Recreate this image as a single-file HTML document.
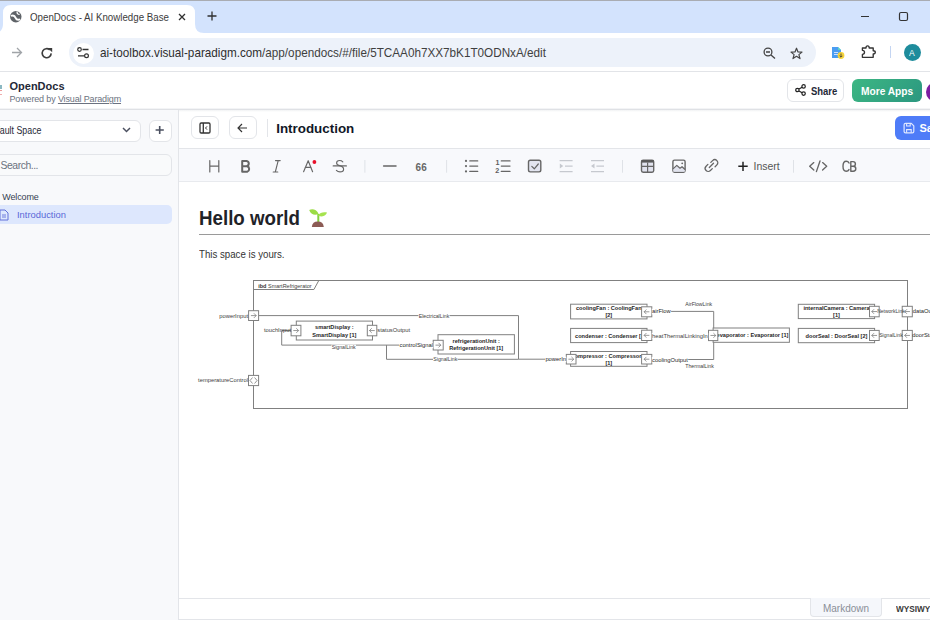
<!DOCTYPE html>
<html><head><meta charset="utf-8"><title>OpenDocs</title>
<style>
html,body{margin:0;padding:0;width:930px;height:620px;overflow:hidden;background:#fff;font-family:"Liberation Sans", sans-serif;}
.t{position:absolute;white-space:nowrap;font-family:"Liberation Sans", sans-serif;}
.r{position:absolute;}
svg.r{overflow:visible}
</style></head><body>
<div class="r" style="left:0px;top:0px;width:930px;height:33px;background:#d3e3fd"></div>
<div class="r" style="left:0px;top:0px;width:930px;height:1px;background:#a9acb2"></div>
<svg class="r" style="left:-6px;top:4px;" width="210" height="30" viewBox="0 0 210 30"><path d="M0 29 Q9 29 9 20 L9 9 Q9 1 17 1 L193 1 Q201 1 201 9 L201 20 Q201 29 210 29 Z" fill="#fff"/></svg>
<svg class="r" style="left:10px;top:11px;" width="12" height="12" viewBox="0 0 12 12"><circle cx="5.8" cy="5.8" r="5.7" fill="#5f6368"/><path d="M1 4.8 C3.2 4 5 5.2 5.6 6.8 C6.2 8.4 8 9.2 10.2 8.4" stroke="#fff" stroke-width="1.9" fill="none"/><path d="M7.2 0.6 C6.8 2.2 7.6 3.4 9.6 3.4" stroke="#fff" stroke-width="1.3" fill="none"/></svg>
<div class="t" style="left:29.50px;top:11.53px;font-size:11.3px;line-height:11.3px;font-weight:400;color:#3c3c3c;letter-spacing:0px;transform:scaleX(0.861);transform-origin:0 0;">OpenDocs - AI Knowledge Base</div>
<svg class="r" style="left:178px;top:13px;" width="8" height="8" viewBox="0 0 8 8"><path d="M1 1 L7 7 M7 1 L1 7" stroke="#303030" stroke-width="1.3"/></svg>
<svg class="r" style="left:207px;top:11.4px;" width="10" height="10" viewBox="0 0 10 10"><path d="M5 0.5 V9.5 M0.5 5 H9.5" stroke="#303030" stroke-width="1.3"/></svg>
<div class="r" style="left:861px;top:16px;width:8px;height:1px;background:#333"></div>
<svg class="r" style="left:898px;top:11px;" width="11" height="11" viewBox="0 0 11 11"><rect x="1.5" y="1.5" width="8" height="8" rx="1.5" fill="none" stroke="#333" stroke-width="1.2"/></svg>
<div class="r" style="left:0px;top:33px;width:930px;height:38px;background:#fff"></div>
<div class="r" style="left:0px;top:71px;width:930px;height:1px;background:#e2e4e8"></div>
<svg class="r" style="left:11px;top:47px;" width="12" height="11" viewBox="0 0 12 11"><path d="M1 5.5 H10.5 M6 1 L10.5 5.5 L6 10" stroke="#a0a4a8" stroke-width="1.3" fill="none"/></svg>
<svg class="r" style="left:41px;top:46.5px;" width="12" height="12" viewBox="0 0 12 12"><path d="M10.2 6.4 A4.5 4.5 0 1 1 8.8 2.9" stroke="#3c3c3c" stroke-width="1.6" fill="none"/><path d="M6.8 0.9 L11.2 0.9 L11.2 5.3 Z" fill="#3c3c3c"/></svg>
<div class="r" style="left:69px;top:38px;width:747px;height:29px;background:#edf2fa;border-radius:14.5px"></div>
<div class="r" style="left:72.5px;top:42.5px;width:21px;height:21px;background:#fff;border-radius:50%"></div>
<svg class="r" style="left:77px;top:47px;" width="13" height="12" viewBox="0 0 13 12"><circle cx="2.5" cy="2.5" r="1.8" fill="none" stroke="#333" stroke-width="1.2"/><path d="M5.5 2.5 H11.5 M1 8.8 H7" stroke="#333" stroke-width="1.3"/><circle cx="9.5" cy="8.8" r="1.9" fill="none" stroke="#333" stroke-width="1.2"/></svg>
<div class="t" style="left:100.00px;top:46.65px;font-size:12.7px;line-height:12.7px;font-weight:400;color:#1f1f1f;letter-spacing:0px;transform:scaleX(0.923);transform-origin:0 0;"><span style="color:#2e2e2e">ai-toolbox.visual-paradigm.com</span><span style="color:#3f3f3f">/app/opendocs/#/file/5TCAA0h7XX7bK1T0ODNxA/edit</span></div>
<svg class="r" style="left:763px;top:47px;" width="13" height="12" viewBox="0 0 13 12"><circle cx="5" cy="5" r="3.9" fill="none" stroke="#444" stroke-width="1.3"/><path d="M3 5 H7 M8 8 L12 11.6" stroke="#444" stroke-width="1.3"/></svg>
<svg class="r" style="left:790px;top:46.5px;" width="13" height="13" viewBox="0 0 13 13"><path d="M6.5 1.2 L8 5 L12 5.1 L8.9 7.6 L10 11.6 L6.5 9.3 L3 11.6 L4.1 7.6 L1 5.1 L5 5 Z" fill="none" stroke="#444" stroke-width="1.2" stroke-linejoin="round"/></svg>
<svg class="r" style="left:831px;top:46px;" width="14" height="13" viewBox="0 0 14 13"><path d="M1 1 H7 L10 4 V12 H1 Z" fill="#4a9df2"/><path d="M7 1 L10 4 H7 Z" fill="#5fd3c4"/><rect x="3" y="6" width="4" height="1" fill="#cfe0ff"/><rect x="3" y="8" width="4" height="1" fill="#cfe0ff"/><circle cx="10" cy="9.5" r="3.4" fill="#f5d33b"/><path d="M10 7.5 V11 M8.6 9.8 L10 11.2 L11.4 9.8" stroke="#333" stroke-width="0.8" fill="none"/></svg>
<svg class="r" style="left:0px;top:0px;" width="930" height="70" viewBox="0 0 930 70"><path d="M862.4 48 H866 C866 45.2 869.2 45.2 869.2 48 H873.2 V50.7 C876 50.7 876 53.9 873.2 53.9 V57.3 H862.4 V54.4 C865.2 54.4 865.2 50.3 862.4 50.3 Z" fill="none" stroke="#333" stroke-width="1.35" stroke-linejoin="round"/></svg>
<div class="r" style="left:890px;top:46px;width:1px;height:12px;background:#c4d5f2"></div>
<div class="r" style="left:904px;top:44px;width:17px;height:17px;background:#1e8c9c;border-radius:50%"></div>
<div class="t" style="left:909.20px;top:47.76px;font-size:9.5px;line-height:9.5px;font-weight:400;color:#fff;letter-spacing:0px;transform:scaleX(0.9);transform-origin:0 0;">A</div>
<div class="r" style="left:0px;top:72px;width:930px;height:37px;background:#fff"></div>
<div class="r" style="left:0px;top:108px;width:930px;height:1px;background:#f3f4f6"></div>
<div class="r" style="left:0px;top:109px;width:930px;height:1px;background:#dfe1e5"></div>
<div class="r" style="left:0px;top:85px;width:1.6px;height:4px;background:#5a9aa8;opacity:.7"></div>
<div class="r" style="left:0px;top:90px;width:1.6px;height:1px;background:#e05a5a;opacity:.6"></div>
<div class="r" style="left:0px;top:94px;width:1.6px;height:1px;background:#e05a5a;opacity:.5"></div>
<div class="t" style="left:9.50px;top:80.99px;font-size:11px;line-height:11px;font-weight:700;color:#1f2937;letter-spacing:0px;">OpenDocs</div>
<div class="t" style="left:9.50px;top:95.18px;font-size:9px;line-height:9px;font-weight:400;color:#6b7280;letter-spacing:-0.15px;">Powered by <span style="text-decoration:underline">Visual Paradigm</span></div>
<div class="r" style="left:786.5px;top:78.5px;width:57px;height:23px;background:#fff;border:1px solid #e3e5e9;border-radius:6px;box-sizing:border-box"></div>
<svg class="r" style="left:795px;top:84px;" width="11" height="12" viewBox="0 0 11 12"><circle cx="8.6" cy="2.4" r="1.7" fill="none" stroke="#222" stroke-width="1.2"/><circle cx="2.4" cy="6" r="1.7" fill="none" stroke="#222" stroke-width="1.2"/><circle cx="8.6" cy="9.6" r="1.7" fill="none" stroke="#222" stroke-width="1.2"/><path d="M4 5.1 L7.1 3.3 M4 6.9 L7.1 8.7" stroke="#222" stroke-width="1.2"/></svg>
<div class="t" style="left:810.60px;top:85.59px;font-size:11px;line-height:11px;font-weight:700;color:#1f2937;letter-spacing:0px;transform:scaleX(0.86);transform-origin:0 0;">Share</div>
<div class="r" style="left:852px;top:78.5px;width:69.5px;height:23.5px;background:linear-gradient(135deg,#3db783,#2b9780);border-radius:6px"></div>
<div class="t" style="left:861.00px;top:85.59px;font-size:11px;line-height:11px;font-weight:700;color:#fff;letter-spacing:0px;transform:scaleX(0.925);transform-origin:0 0;">More Apps</div>
<div class="r" style="left:926px;top:82px;width:20px;height:20px;background:#7b1fa2;border-radius:50%"></div>
<div class="r" style="left:0px;top:110px;width:178px;height:510px;background:#f8f9fb"></div>
<div class="r" style="left:178px;top:110px;width:1px;height:510px;background:#e3e5e9"></div>
<div class="r" style="left:-30px;top:119.5px;width:171px;height:22px;background:#fff;border:1px solid #e3e5e9;border-radius:6px;box-sizing:border-box"></div>
<div class="t" style="left:-13.60px;top:125.67px;font-size:10.2px;line-height:10.2px;font-weight:400;color:#1f2937;letter-spacing:0px;transform:scaleX(0.867);transform-origin:0 0;">Default Space</div>
<svg class="r" style="left:122px;top:127px;" width="9" height="6" viewBox="0 0 9 6"><path d="M1 1 L4.5 4.5 L8 1" stroke="#4b5060" stroke-width="1.45" fill="none"/></svg>
<div class="r" style="left:149px;top:119.5px;width:22.5px;height:22px;background:#fff;border:1px solid #e3e5e9;border-radius:6px;box-sizing:border-box"></div>
<svg class="r" style="left:155px;top:125px;" width="11" height="11" viewBox="0 0 11 11"><path d="M4.7 0.9 V9 M0.6 4.95 H8.8" stroke="#4b5060" stroke-width="1.6"/></svg>
<div class="r" style="left:-30px;top:153.5px;width:201.5px;height:22px;background:#f9fafb;border:1px solid #e3e5e9;border-radius:6px;box-sizing:border-box"></div>
<div class="t" style="left:0.50px;top:160.60px;font-size:10.4px;line-height:10.4px;font-weight:400;color:#6b7280;letter-spacing:-0.45px;">Search...</div>
<div class="t" style="left:2.30px;top:193.18px;font-size:9px;line-height:9px;font-weight:400;color:#374151;letter-spacing:-0.14px;">Welcome</div>
<div class="r" style="left:-10px;top:205px;width:182px;height:18.5px;background:#dde7fd;border-radius:5px"></div>
<svg class="r" style="left:-1px;top:208.5px;" width="10" height="12" viewBox="0 0 10 12"><path d="M1 1 H6 L9 4 V11 H1 Z" fill="none" stroke="#6271d9" stroke-width="1"/><path d="M3 6 H7 M3 8 H7" stroke="#6271d9" stroke-width="0.9"/></svg>
<div class="t" style="left:17.00px;top:209.74px;font-size:9.4px;line-height:9.4px;font-weight:400;color:#5a67d8;letter-spacing:0px;">Introduction</div>
<div class="r" style="left:179px;top:110px;width:751px;height:38px;background:#fff"></div>
<div class="r" style="left:179px;top:110px;width:751px;height:2px;background:linear-gradient(#f1f2f4,#fff)"></div>
<div class="r" style="left:179px;top:148px;width:751px;height:1px;background:#e3e5e9"></div>
<div class="r" style="left:190.5px;top:116.2px;width:28.5px;height:23.2px;background:#fff;border:1px solid #e3e5e9;border-radius:6px;box-sizing:border-box"></div>
<svg class="r" style="left:199px;top:122px;" width="12" height="12" viewBox="0 0 12 12"><rect x="1" y="1" width="10" height="10" rx="1.2" fill="none" stroke="#333" stroke-width="1.3"/><path d="M4.3 1 V11" stroke="#333" stroke-width="1.3"/><path d="M8 4.4 L6.5 6 L8 7.6" stroke="#333" stroke-width="1" fill="none"/></svg>
<div class="r" style="left:229px;top:116.2px;width:27.5px;height:23.2px;background:#fff;border:1px solid #e3e5e9;border-radius:6px;box-sizing:border-box"></div>
<svg class="r" style="left:237px;top:123px;" width="11" height="10" viewBox="0 0 11 10"><path d="M10 5 H1.5 M5 1 L1 5 L5 9" stroke="#333" stroke-width="1.15" fill="none"/></svg>
<div class="r" style="left:266.5px;top:118.5px;width:1px;height:18.5px;background:#e3e5e9"></div>
<div class="t" style="left:276.20px;top:121.86px;font-size:13.4px;line-height:13.4px;font-weight:700;color:#111827;letter-spacing:0px;">Introduction</div>
<div class="r" style="left:894.8px;top:116.1px;width:60px;height:23.6px;background:#4e7cf8;border-radius:6px"></div>
<svg class="r" style="left:903px;top:122px;" width="12" height="12" viewBox="0 0 12 12"><path d="M2.5 1.3 H8.3 L10.8 3.8 V9.5 Q10.8 10.9 9.4 10.9 H2.5 Q1.1 10.9 1.1 9.5 V2.7 Q1.1 1.3 2.5 1.3 Z" fill="none" stroke="#dfe7ff" stroke-width="1.2" stroke-linejoin="round"/><path d="M3.6 1.5 V4 H7.2 V1.5 M3.6 10.8 V7.6 H8.2 V10.8" fill="none" stroke="#dfe7ff" stroke-width="1.1"/></svg>
<div class="t" style="left:919.50px;top:123.19px;font-size:11px;line-height:11px;font-weight:700;color:#fff;letter-spacing:0px;">Save</div>
<div class="r" style="left:179px;top:149px;width:751px;height:32px;background:#f8f9fc"></div>
<div class="r" style="left:179px;top:181px;width:751px;height:1px;background:#e8eaee"></div>
<svg class="r" style="left:0;top:0" width="930" height="620" viewBox="0 0 930 620"><path d="M209.8 160.5 V172 M218.8 160.5 V172 M209.8 166.2 H218.8" stroke="#666" fill="none" stroke-linecap="round" stroke-linejoin="round" stroke-width="1.2" stroke="#777"/><path d="M242.2 160.9 H246.6 A2.7 2.7 0 0 1 246.6 166.2 H242.2 Z M242.2 166.2 H247.2 A2.9 2.9 0 0 1 247.2 171.7 H242.2 Z" stroke="#666" fill="none" stroke-linecap="round" stroke-linejoin="round" stroke-width="2" stroke="#555"/><path d="M275.5 160.6 H280.2 M273.2 172 H277.8 M278.2 160.6 L275.3 172" stroke="#666" fill="none" stroke-linecap="round" stroke-linejoin="round" stroke-width="1.1"/><path d="M303.6 171.7 L308.2 160.7 L312.6 171.7 M305.2 167.4 H311.1" stroke="#666" fill="none" stroke-linecap="round" stroke-linejoin="round" stroke-width="1.15"/><circle cx="314.4" cy="162" r="1.9" fill="#e8102a"/><path d="M333.2 165.9 H346.4" stroke="#666" fill="none" stroke-linecap="round" stroke-linejoin="round" stroke-width="1.15"/><path d="M342.8 161.8 Q341.5 160.5 339.6 160.5 Q336.6 160.5 336.6 163 Q336.6 164.9 339.6 165.6 Q343.6 166.6 343.6 169.2 Q343.6 171.8 340 171.8 Q337.8 171.8 336.4 170.3" stroke="#666" fill="none" stroke-linecap="round" stroke-linejoin="round" stroke-width="1.15"/><path d="M364.9 160 V172.7 M446.6 160 V172.7 M622.5 160 V172.7 M793.5 160 V172.7" stroke="#dfe2e7" stroke-width="1"/><path d="M383.6 166.1 H396" stroke="#666" fill="none" stroke-linecap="round" stroke-linejoin="round" stroke-width="1.5"/><text x="415.6" y="170.6" font-family="Liberation Sans" font-weight="700" font-size="10.5" fill="#666" transform="translate(415.6 0) scale(0.95 1) translate(-415.6 0)">66</text><g fill="#666"><circle cx="466" cy="160.9" r="1.1"/><circle cx="466" cy="166.1" r="1.1"/><circle cx="466" cy="171.4" r="1.1"/></g><path d="M469.8 160.9 H477.7 M469.8 166.1 H477.7 M469.8 171.4 H477.7" stroke="#666" fill="none" stroke-linecap="round" stroke-linejoin="round" stroke-width="1.3"/><text x="495.5" y="165" font-family="Liberation Sans" font-weight="700" font-size="7.2" fill="#5e5e5e">1</text><text x="495.2" y="172.7" font-family="Liberation Sans" font-weight="700" font-size="7.2" fill="#5e5e5e">2</text><path d="M501.3 160.9 H510 M501.3 166.1 H510 M501.3 171.4 H510" stroke="#666" fill="none" stroke-linecap="round" stroke-linejoin="round" stroke-width="1.3"/><rect x="528.5" y="160.3" width="12.3" height="11.6" rx="1.8" fill="#e3e5f0" stroke="#666" stroke-width="1.4"/><path d="M531.8 166.4 L534.3 168.8 L538.3 164" stroke="#666" fill="none" stroke-linecap="round" stroke-linejoin="round" stroke-width="1.2"/><path d="M559.6 160.6 H572.6 M565 166.1 H572.6 M559.6 171.6 H572.6" stroke="#c6c9cf" stroke-width="1.2" fill="none"/><path d="M559.8 163.6 L563.3 166.1 L559.8 168.6 Z" fill="#c6c9cf"/><path d="M591 160.6 H604 M596.4 166.1 H604 M591 171.6 H604" stroke="#c6c9cf" stroke-width="1.2" fill="none"/><path d="M594.5 163.6 L591 166.1 L594.5 168.6 Z" fill="#c6c9cf"/><rect x="641.5" y="160.1" width="12.2" height="12.1" rx="1.6" fill="#e1e3ee" stroke="#666" stroke-width="1.4"/><path d="M641.5 161.3 H653.7" stroke="#5a5a5a" stroke-width="2.6"/><path d="M641.5 166.4 H653.7 M647.6 162.4 V172.2" stroke="#666" stroke-width="1.2"/><rect x="672.9" y="160.1" width="12.2" height="12.1" rx="1.6" fill="none" stroke="#666" stroke-width="1.4"/><path d="M673.3 168.6 L676.8 165.4 L680 168.2 L682 166.7 L684.8 169.3 V171.8 H673.3 Z" fill="#e1e3ee"/><path d="M673.3 168.6 L676.8 165.4 L680 168.2 L682 166.7 L684.8 169.3" stroke="#666" fill="none" stroke-linecap="round" stroke-linejoin="round" stroke-width="1.2"/><circle cx="682.2" cy="163.3" r="0.9" fill="#666"/><path d="M709.3 167.5 L713.5 163.3" stroke="#666" fill="none" stroke-linecap="round" stroke-linejoin="round" stroke-width="1.3"/><path d="M710.8 162.4 L712.6 160.6 A2.6 2.6 0 0 1 716.9 164.9 L715.1 166.7 M712.3 168.6 L710.4 170.5 A2.6 2.6 0 0 1 706.1 166.2 L707.9 164.4" stroke="#666" fill="none" stroke-linecap="round" stroke-linejoin="round" stroke-width="1.3"/><path d="M743 161.8 V170.9 M738.3 166.35 H747.7" stroke="#222" stroke-width="1.5"/><path d="M813.8 162.6 L809.7 166.3 L813.8 170 M822.6 162.6 L826.7 166.3 L822.6 170 M820 161 L816.4 171.6" stroke="#666" fill="none" stroke-linecap="round" stroke-linejoin="round" stroke-width="1.35" stroke="#6a6a6a"/><path d="M849 163 Q848.2 161.3 846.2 161.3 Q843 161.3 843 166.3 Q843 171.3 846.2 171.3 Q848.2 171.3 849 169.6 M850.8 161.6 H853 Q855.4 161.6 855.4 163.9 Q855.4 166.2 853 166.2 H850.8 Z M850.8 166.2 H853.2 Q855.8 166.2 855.8 168.75 Q855.8 171.2 853.2 171.2 H850.8 Z" stroke="#666" fill="none" stroke-linecap="round" stroke-linejoin="round" stroke-width="1.4" stroke="#737373"/></svg>
<div class="t" style="left:753.50px;top:161.41px;font-size:10.5px;line-height:10.5px;font-weight:400;color:#555;letter-spacing:0px;">Insert</div>
<div class="t" style="left:198.90px;top:209.08px;font-size:19.4px;line-height:19.4px;font-weight:700;color:#1f2328;letter-spacing:0px;transform:scaleX(0.966);transform-origin:0 0;">Hello world</div>
<svg class="r" style="left:300px;top:203px;" width="35" height="29" viewBox="0 0 35 29"><path d="M18.3 11 V19.2" stroke="#84d13e" stroke-width="2"/><path d="M9.2 7 C12 5.6 16.5 6 18.6 10.9 C15 12.6 10.5 11.6 9.2 7 Z" fill="#9bdc45"/><path d="M18 12.6 C20 9.4 23.6 8.8 27 9.6 C26 12.9 22.5 14.6 18 12.6 Z" fill="#a6e34f"/><path d="M11.8 24 Q12.4 18.6 17.8 18.6 Q23.2 18.6 23.8 24 Z" fill="#8c5b55"/></svg>
<div class="r" style="left:199px;top:233.8px;width:731px;height:1.5px;background:#9a9a9a"></div>
<div class="t" style="left:198.90px;top:250.08px;font-size:10.3px;line-height:10.3px;font-weight:400;color:#333;letter-spacing:0px;transform:scaleX(0.94);transform-origin:0 0;">This space is yours.</div>
<div class="r" style="left:179px;top:598px;width:751px;height:1px;background:#e3e5e9"></div>
<div class="r" style="left:179px;top:619px;width:751px;height:1px;background:#e3e5e9"></div>
<div class="r" style="left:810.3px;top:598px;width:71.5px;height:18.5px;background:#f5f7fb;border:1px solid #e3e5e9;border-top:none;border-radius:0 0 4px 4px;box-sizing:border-box"></div>
<div class="t" style="left:823.00px;top:603.97px;font-size:10.2px;line-height:10.2px;font-weight:400;color:#8a8f98;letter-spacing:0px;transform:scaleX(0.98);transform-origin:0 0;">Markdown</div>
<div class="t" style="left:896.20px;top:603.54px;font-size:9.4px;line-height:9.4px;font-weight:700;color:#3a3a3a;letter-spacing:0px;transform:scaleX(0.88);transform-origin:0 0;">WYSIWYG</div>
<svg class="r" style="left:195px;top:275px;" width="735" height="140" viewBox="195 275 735 140"><rect x="253.5" y="280.5" width="654" height="128" fill="#fff" stroke="#808080" stroke-width="1"/>
<path d="M253.5 289.5 H313.9 L318.8 280.5" stroke="#808080" stroke-width="1" fill="none"/>
<text x="258.2" y="288.1" text-anchor="start" font-family="Liberation Sans" font-size="5.5" font-weight="400" fill="#3d3d3d"><tspan font-weight="700" fill="#333">ibd</tspan> SmartRefrigerator</text>
<path d="M258.6 315.6 H518.5 V359.2 H566.3" stroke="#808080" stroke-width="1" fill="none"/>
<path d="M291.1 330.5 H281.7 V345.1 H433.2" stroke="#808080" stroke-width="1" fill="none"/>
<path d="M386.5 345.1 V359.3 H518.5" stroke="#808080" stroke-width="1" fill="none"/>
<path d="M651.8 311.4 H713.7 V359.5 H651.8" stroke="#808080" stroke-width="1" fill="none"/>
<path d="M651.8 335.4 H708.5" stroke="#808080" stroke-width="1" fill="none"/>
<rect x="296.3" y="321.1" width="76.20" height="18.90" fill="#fff" stroke="#808080" stroke-width="1"/>
<rect x="438" y="334.7" width="76.40" height="19.30" fill="#fff" stroke="#808080" stroke-width="1"/>
<rect x="570.6" y="304.2" width="76.40" height="14.70" fill="#fff" stroke="#808080" stroke-width="1"/>
<rect x="570.6" y="328.4" width="76.40" height="14.20" fill="#fff" stroke="#808080" stroke-width="1"/>
<rect x="570.6" y="351.5" width="76.40" height="14.80" fill="#fff" stroke="#808080" stroke-width="1"/>
<rect x="713.1" y="328" width="76.30" height="14.30" fill="#fff" stroke="#808080" stroke-width="1"/>
<rect x="798.3" y="304.3" width="76.30" height="14.30" fill="#fff" stroke="#808080" stroke-width="1"/>
<rect x="798.3" y="328.4" width="76.30" height="14.30" fill="#fff" stroke="#808080" stroke-width="1"/>
<text x="334.4" y="329" text-anchor="middle" font-family="Liberation Sans" font-size="5.6" font-weight="700" fill="#262626">smartDisplay :</text>
<text x="334.4" y="336.6" text-anchor="middle" font-family="Liberation Sans" font-size="5.6" font-weight="700" fill="#262626">SmartDisplay [1]</text>
<text x="476.2" y="342.5" text-anchor="middle" font-family="Liberation Sans" font-size="5.6" font-weight="700" fill="#262626">refrigerationUnit :</text>
<text x="476.2" y="350" text-anchor="middle" font-family="Liberation Sans" font-size="5.6" font-weight="700" fill="#262626">RefrigerationUnit [1]</text>
<clipPath id="c1"><rect x="571" y="300" width="72" height="70"/></clipPath>
<g clip-path="url(#c1)">
<text x="608.8" y="310" text-anchor="middle" font-family="Liberation Sans" font-size="5.6" font-weight="700" fill="#262626">coolingFan : CoolingFan</text>
<text x="608.8" y="317.3" text-anchor="middle" font-family="Liberation Sans" font-size="5.6" font-weight="700" fill="#262626">[2]</text>
<text x="610.5" y="337.6" text-anchor="middle" font-family="Liberation Sans" font-size="5.6" font-weight="700" fill="#262626">condenser : Condenser [1]</text>
<text x="606.5" y="357.6" text-anchor="middle" font-family="Liberation Sans" font-size="5.6" font-weight="700" fill="#262626">compressor : Compressor</text>
<text x="608.8" y="365" text-anchor="middle" font-family="Liberation Sans" font-size="5.6" font-weight="700" fill="#262626">[1]</text>
</g>
<text x="752.5" y="337.4" text-anchor="middle" font-family="Liberation Sans" font-size="5.6" font-weight="700" fill="#262626">evaporator : Evaporator [1]</text>
<clipPath id="c2"><rect x="799" y="300" width="72" height="50"/></clipPath>
<g clip-path="url(#c2)">
<text x="836.5" y="310" text-anchor="middle" font-family="Liberation Sans" font-size="5.6" font-weight="700" fill="#262626">internalCamera : Camera</text>
<text x="836.5" y="317.4" text-anchor="middle" font-family="Liberation Sans" font-size="5.6" font-weight="700" fill="#262626">[1]</text>
</g>
<text x="836.5" y="337.6" text-anchor="middle" font-family="Liberation Sans" font-size="5.6" font-weight="700" fill="#262626">doorSeal : DoorSeal [2]</text>
<rect x="248.6" y="310.7" width="10.00" height="9.80" fill="#fff" stroke="#808080" stroke-width="1"/>
<path d="M250.90000000000003 315.6 H256.20000000000005 M253.90000000000003 313.3 L256.20000000000005 315.6 L253.90000000000003 317.90000000000003" stroke="#777" stroke-width="0.75" fill="none"/>
<rect x="248.5" y="375.4" width="10.10" height="10.20" fill="#fff" stroke="#808080" stroke-width="1"/>
<path d="M252.55 377.5 L250.05 380.5 L252.55 383.5 M254.55 377.5 L257.05 380.5 L254.55 383.5" stroke="#666" stroke-width="0.7" fill="none"/>
<rect x="291.1" y="325.3" width="9.80" height="10.50" fill="#fff" stroke="#808080" stroke-width="1"/>
<path d="M293.3 330.55 H298.6 M296.3 328.25 L298.6 330.55 L296.3 332.85" stroke="#777" stroke-width="0.75" fill="none"/>
<rect x="367.3" y="325.3" width="9.50" height="10.50" fill="#fff" stroke="#808080" stroke-width="1"/>
<path d="M374.75 330.55 H369.45 M371.75 328.25 L369.45 330.55 L371.75 332.85" stroke="#777" stroke-width="0.75" fill="none"/>
<rect x="433.2" y="340.3" width="10.00" height="9.70" fill="#fff" stroke="#808080" stroke-width="1"/>
<path d="M435.5 345.15 H440.8 M438.5 342.84999999999997 L440.8 345.15 L438.5 347.45" stroke="#777" stroke-width="0.75" fill="none"/>
<rect x="641.6" y="306.8" width="10.20" height="10.00" fill="#fff" stroke="#808080" stroke-width="1"/>
<path d="M649.4000000000001 311.8 H644.1 M646.4000000000001 309.5 L644.1 311.8 L646.4000000000001 314.1" stroke="#777" stroke-width="0.75" fill="none"/>
<rect x="641.6" y="330.2" width="10.20" height="10.30" fill="#fff" stroke="#808080" stroke-width="1"/>
<path d="M649.4000000000001 335.35 H644.1 M646.4000000000001 333.05 L644.1 335.35 L646.4000000000001 337.65000000000003" stroke="#777" stroke-width="0.75" fill="none"/>
<rect x="566.3" y="354.4" width="9.70" height="9.60" fill="#fff" stroke="#808080" stroke-width="1"/>
<path d="M568.4499999999999 359.2 H573.75 M571.4499999999999 356.9 L573.75 359.2 L571.4499999999999 361.5" stroke="#777" stroke-width="0.75" fill="none"/>
<rect x="641.6" y="354.4" width="10.20" height="9.60" fill="#fff" stroke="#808080" stroke-width="1"/>
<path d="M649.4000000000001 359.2 H644.1 M646.4000000000001 356.9 L644.1 359.2 L646.4000000000001 361.5" stroke="#777" stroke-width="0.75" fill="none"/>
<rect x="708.5" y="330.3" width="9.30" height="10.30" fill="#fff" stroke="#808080" stroke-width="1"/>
<path d="M710.4499999999999 335.45000000000005 H715.75 M713.4499999999999 333.15000000000003 L715.75 335.45000000000005 L713.4499999999999 337.75000000000006" stroke="#777" stroke-width="0.75" fill="none"/>
<rect x="869.5" y="306.3" width="9.70" height="10.50" fill="#fff" stroke="#808080" stroke-width="1"/>
<path d="M877.0500000000001 311.55 H871.75 M874.0500000000001 309.25 L871.75 311.55 L874.0500000000001 313.85" stroke="#777" stroke-width="0.75" fill="none"/>
<rect x="869.5" y="330.4" width="9.70" height="10.10" fill="#fff" stroke="#808080" stroke-width="1"/>
<path d="M877.0500000000001 335.45 H871.75 M874.0500000000001 333.15 L871.75 335.45 L874.0500000000001 337.75" stroke="#777" stroke-width="0.75" fill="none"/>
<rect x="902.2" y="306.3" width="10.10" height="10.50" fill="#fff" stroke="#808080" stroke-width="1"/>
<path d="M909.95 311.55 H904.65 M906.95 309.25 L904.65 311.55 L906.95 313.85" stroke="#777" stroke-width="0.75" fill="none"/>
<rect x="902.2" y="330.4" width="10.10" height="10.10" fill="#fff" stroke="#808080" stroke-width="1"/>
<path d="M909.95 335.45 H904.65 M906.95 333.15 L904.65 335.45 L906.95 337.75" stroke="#777" stroke-width="0.75" fill="none"/>
<text x="248" y="317.6" text-anchor="end" font-family="Liberation Sans" font-size="5.8" font-weight="400" fill="#3d3d3d">powerInput</text>
<text x="248" y="381.6" text-anchor="end" font-family="Liberation Sans" font-size="5.8" font-weight="400" fill="#3d3d3d">temperatureControl</text>
<text x="291" y="331.6" text-anchor="end" font-family="Liberation Sans" font-size="5.8" font-weight="400" fill="#3d3d3d">touchInput</text>
<text x="377.3" y="331.8" text-anchor="start" font-family="Liberation Sans" font-size="5.8" font-weight="400" fill="#3d3d3d">statusOutput</text>
<rect x="418.38" y="313.10" width="31.23" height="5.6" fill="#fff"/>
<text x="434" y="317.7" text-anchor="middle" font-family="Liberation Sans" font-size="5.2" font-weight="400" fill="#3d3d3d">ElectricalLink</text>
<rect x="331.40" y="344.60" width="24.59" height="5.6" fill="#fff"/>
<text x="343.7" y="349.2" text-anchor="middle" font-family="Liberation Sans" font-size="5.2" font-weight="400" fill="#3d3d3d">SignalLink</text>
<rect x="399.17" y="342.60" width="34.13" height="5.6" fill="#fff"/>
<text x="433" y="347.2" text-anchor="end" font-family="Liberation Sans" font-size="5.8" font-weight="400" fill="#262626">controlSignal</text>
<rect x="433.00" y="356.60" width="24.59" height="5.6" fill="#fff"/>
<text x="445.3" y="361.2" text-anchor="middle" font-family="Liberation Sans" font-size="5.2" font-weight="400" fill="#3d3d3d">SignalLink</text>
<rect x="545.07" y="356.70" width="21.23" height="5.6" fill="#fff"/>
<text x="566" y="361.3" text-anchor="end" font-family="Liberation Sans" font-size="5.8" font-weight="400" fill="#262626">powerIn</text>
<rect x="651.80" y="308.80" width="19.29" height="5.6" fill="#fff"/>
<text x="652.1" y="313.4" text-anchor="start" font-family="Liberation Sans" font-size="5.8" font-weight="400" fill="#262626">airFlow</text>
<rect x="651.80" y="332.90" width="56.37" height="5.6" fill="#fff"/>
<text x="652.1" y="337.5" text-anchor="start" font-family="Liberation Sans" font-size="5.8" font-weight="400" fill="#3d3d3d">heatThermalLinkingIn</text>
<rect x="651.80" y="356.90" width="36.39" height="5.6" fill="#fff"/>
<text x="652.1" y="361.5" text-anchor="start" font-family="Liberation Sans" font-size="5.8" font-weight="400" fill="#262626">coolingOutput</text>
<text x="685.3" y="305.8" text-anchor="start" font-family="Liberation Sans" font-size="5.2" font-weight="400" fill="#3d3d3d">AirFlowLink</text>
<text x="685.3" y="367.5" text-anchor="start" font-family="Liberation Sans" font-size="5.2" font-weight="400" fill="#3d3d3d">ThermalLink</text>
<text x="877.2" y="313.3" text-anchor="start" font-family="Liberation Sans" font-size="5.0" font-weight="400" fill="#3d3d3d">NetworkLink</text>
<text x="879.2" y="337.4" text-anchor="start" font-family="Liberation Sans" font-size="5.1" font-weight="400" fill="#3d3d3d">SignalLink</text>
<text x="912.8" y="313.4" text-anchor="start" font-family="Liberation Sans" font-size="5.8" font-weight="400" fill="#262626">dataOutput</text>
<text x="912.3" y="337.4" text-anchor="start" font-family="Liberation Sans" font-size="5.8" font-weight="400" fill="#262626">doorStatus</text></svg>
</body></html>
